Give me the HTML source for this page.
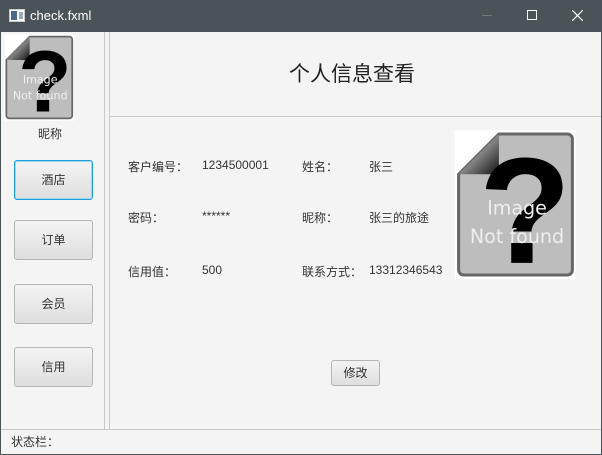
<!DOCTYPE html>
<html><head><meta charset="utf-8"><style>
*{margin:0;padding:0;box-sizing:border-box}
body{width:602px;height:455px;overflow:hidden;background:#4a5357;font-family:"Liberation Sans","Noto Sans CJK SC",sans-serif;font-size:12px;color:#333;position:relative}
.title{position:absolute;left:0;top:0;width:602px;height:32px;background:#4a5357;color:#fff;font-size:13px}
.c{position:absolute;left:1px;top:32px;width:600px;height:422px;background:#f4f4f4}
.a{position:absolute;white-space:nowrap}
.btn{position:absolute;left:13px;width:79px;height:40px;border:1px solid #b5b5b5;border-radius:3px;background:linear-gradient(#f4f4f4,#dedede);text-align:center;line-height:38px;font-size:12px;color:#333}
.vl{position:absolute;top:0;width:1px;height:398px;background:#c8c8c8}
.t{top:1px}
</style></head><body>
<div class="title">
<svg style="position:absolute;left:9px;top:9px" width="16" height="14"><rect x="0.5" y="0.5" width="15" height="12" fill="#fff" stroke="#ccc"/><rect x="2" y="2" width="6" height="9" fill="#4a6a8a"/><rect x="10" y="3" width="4" height="7" fill="#9ab"/></svg>
<span class="a" style="left:30px;top:8px">check.fxml</span>
<div class="a" style="left:482px;top:15px;width:10px;height:1px;background:#777"></div>
<div class="a" style="left:527px;top:10px;width:10px;height:10px;border:1px solid #fff"></div>
<svg class="a" style="left:572px;top:10px" width="11" height="11"><path d="M0 0L11 11M11 0L0 11" stroke="#fff" stroke-width="1.2"/></svg>
</div>
<div class="c">
<svg class="a" style="left:3px;top:2px" width="70" height="87" viewBox="0 0 120 148"><rect width="120" height="148" fill="#fff"/><path d="M44 4H112a5 5 0 0 1 5 5V139a5 5 0 0 1-5 5H9a5 5 0 0 1-5-5V44Z" fill="#bdbdbd" stroke="#666" stroke-width="3"/><defs><linearGradient id="g" x1="0" y1="0" x2="1" y2="1"><stop offset="0" stop-color="#fff"/><stop offset="1" stop-color="#111"/></linearGradient></defs><path d="M44 4V44H4Z" fill="url(#g)"/><text x="70" y="132" font-size="150" font-weight="bold" text-anchor="middle" font-family="Liberation Sans" fill="#000">?</text><text x="62" y="84" font-size="19" text-anchor="middle" fill="#eee" font-family="DejaVu Sans">Image</text><text x="62" y="112" font-size="19" text-anchor="middle" fill="#eee" font-family="DejaVu Sans">Not found</text></svg>
<span class="a" style="left:37px;top:93px">昵称</span>
<div class="btn" style="top:128px;border-color:#1e9fdc;box-shadow:inset 0 0 0 1px #9fd6f0">酒店</div>
<div class="btn" style="top:188px">订单</div>
<div class="btn" style="top:252px">会员</div>
<div class="btn" style="top:315px">信用</div>
<div class="vl" style="left:103px"></div>
<div class="vl" style="left:108px"></div>
<div class="a" style="left:109px;top:84px;width:491px;height:1px;background:#c8c8c8"></div>
<span class="a" style="left:288px;top:26px;font-size:21px;color:#222">个人信息查看</span>
<span class="a" style="left:127px;top:126px">客户编号：</span><span class="a" style="left:201px;top:126px">1234500001</span>
<span class="a" style="left:301px;top:126px">姓名：</span><span class="a" style="left:368px;top:126px">张三</span>
<span class="a" style="left:127px;top:177px">密码：</span><span class="a" style="left:201px;top:177px">******</span>
<span class="a" style="left:301px;top:177px">昵称：</span><span class="a" style="left:368px;top:177px">张三的旅途</span>
<span class="a" style="left:127px;top:231px">信用值：</span><span class="a" style="left:201px;top:231px">500</span>
<span class="a" style="left:301px;top:231px">联系方式：</span><span class="a" style="left:368px;top:231px">13312346543</span>
<svg class="a" style="left:453px;top:98px" width="122" height="149" viewBox="0 0 120 148"><rect width="120" height="148" fill="#fff"/><path d="M44 4H112a5 5 0 0 1 5 5V139a5 5 0 0 1-5 5H9a5 5 0 0 1-5-5V44Z" fill="#bdbdbd" stroke="#666" stroke-width="3"/><path d="M44 4V44H4Z" fill="url(#g)"/><text x="70" y="132" font-size="150" font-weight="bold" text-anchor="middle" font-family="Liberation Sans" fill="#000">?</text><text x="62" y="84" font-size="19" text-anchor="middle" fill="#eee" font-family="DejaVu Sans">Image</text><text x="62" y="112" font-size="19" text-anchor="middle" fill="#eee" font-family="DejaVu Sans">Not found</text></svg>
<div class="btn" style="left:330px;top:328px;width:49px;height:26px;line-height:24px">修改</div>
<div class="a" style="left:0;top:397px;width:600px;height:1px;background:#c8c8c8"></div>
<span class="a" style="left:10px;top:401px">状态栏：</span>
</div>
</body></html>
